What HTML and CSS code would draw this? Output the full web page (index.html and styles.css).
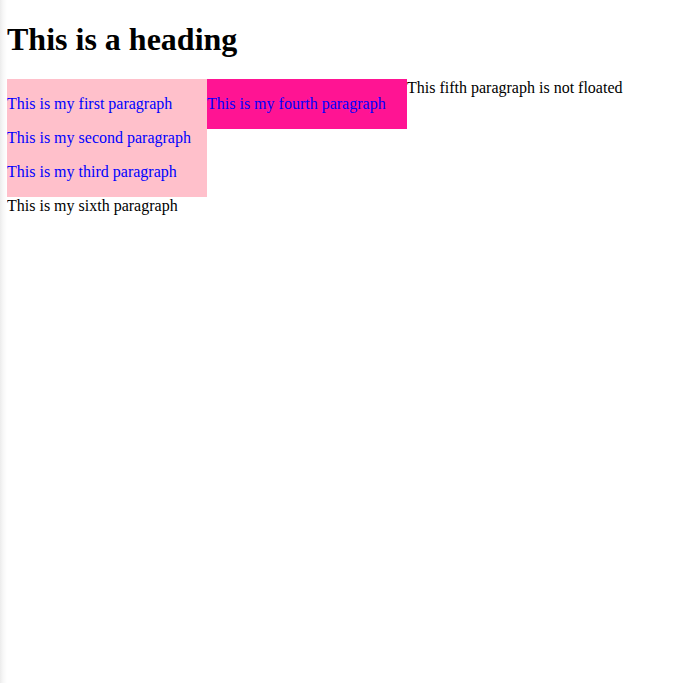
FILE: index.html
```html
<!DOCTYPE html>
<html>
<head>
<meta charset="utf-8">
<title>Floats</title>
<link rel="stylesheet" href="styles.css">
</head>
<body>
<h1 class="title">This is a heading</h1>
<div class="box box-pink">
  <p class="para">This is my first paragraph</p>
  <p class="para">This is my second paragraph</p>
  <p class="para">This is my third paragraph</p>
</div>
<div class="box box-deep">
  <p class="para">This is my fourth paragraph</p>
</div>
<p class="plain">This fifth paragraph is not floated</p>
<p class="plain clear">This is my sixth paragraph</p>
</body>
</html>
```

FILE: styles.css
```css
html {
  background: linear-gradient(to right, #ececec 0, #f7f7f7 3px, #ffffff 7px) no-repeat;
  background-color: #ffffff;
  min-height: 100%;
}
body {
  margin: 0 8px 8px 7px;
  font-family: "Liberation Serif", "Times New Roman", serif;
  font-size: 16px;
  color: #000;
}
.title {
  font-size: 32px;
  font-weight: bold;
  margin: 20.6px 0 21px;
}
.box {
  float: left;
  width: 200px;
}
.box-pink {
  background: #ffc0cb;
}
.box-deep {
  background: #ff1493;
}
.para {
  color: blue;
  margin: 16px 0;
}
.plain {
  margin: 16px 0;
}
.clear {
  clear: both;
}
```
